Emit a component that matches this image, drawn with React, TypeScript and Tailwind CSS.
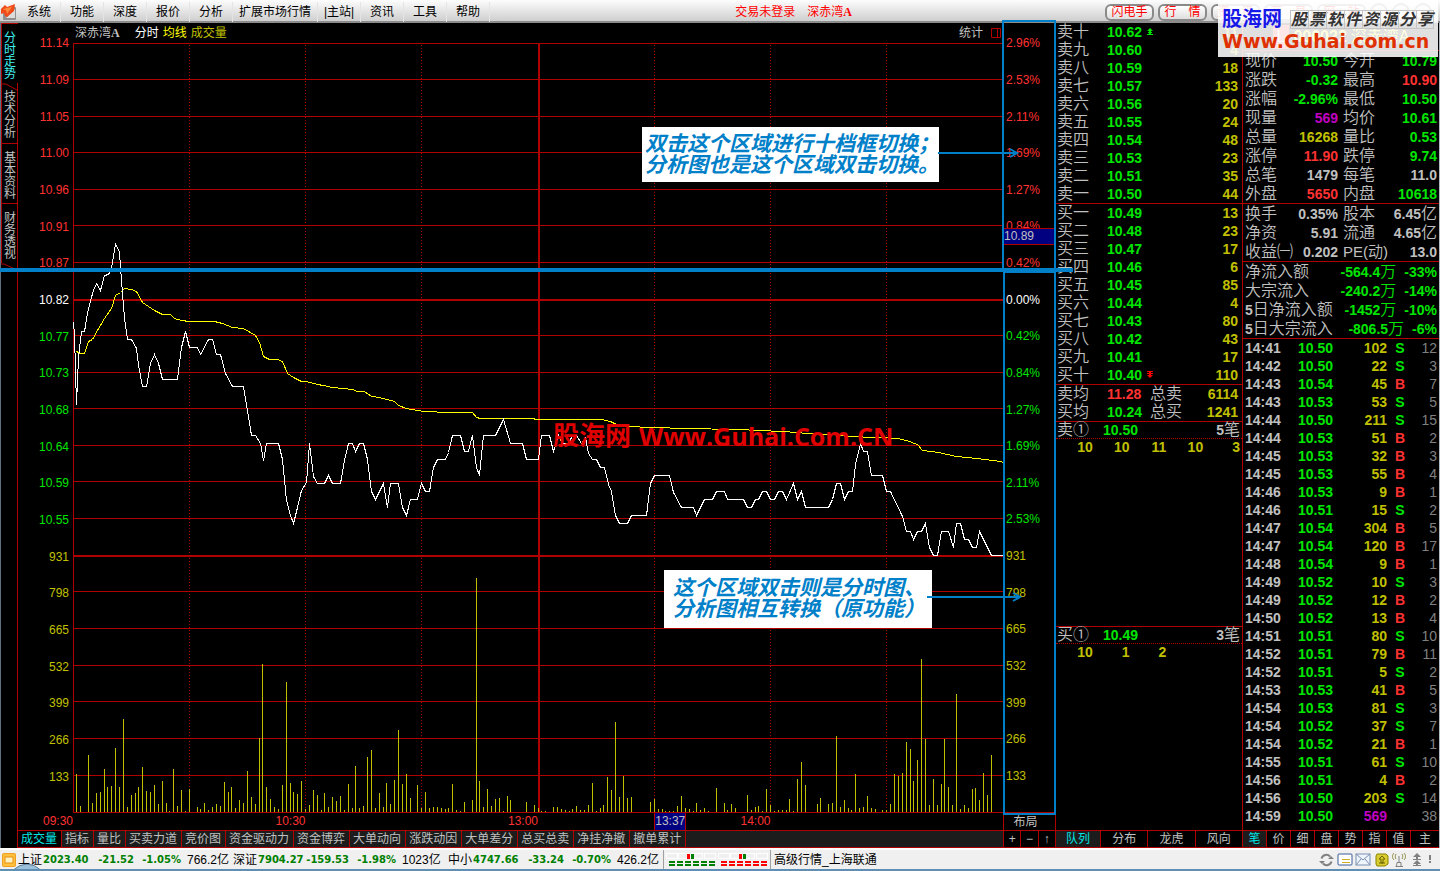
import React from "react";

const MENU = ["系统", "功能", "深度", "报价", "分析", "扩展市场行情", "|主站|", "资讯", "工具", "帮助"];
const SIDE_TABS = ["分时走势", "技术分析", "基本资料", "财务透视"];
const CHART_TABS = [
  "成交量", "指标", "量比", "买卖力道", "竞价图", "资金驱动力", "资金博弈",
  "大单动向", "涨跌动因", "大单差分", "总买总卖", "净挂净撤", "撤单累计",
];

const RED = "text-[#ff3232]";
const GREEN = "text-[#00e600]";
const YELLOW = "text-[#c0c000]";
const GRAY = "text-[#c0c0c0]";
const MAGENTA = "text-[#c000c0]";

const LEFT_SCALE: [string, string][] = [
  ["11.14", RED], ["11.09", RED], ["11.05", RED], ["11.00", RED], ["10.96", RED], ["10.91", RED], ["10.87", RED],
  ["10.82", "text-white"],
  ["10.77", GREEN], ["10.73", GREEN], ["10.68", GREEN], ["10.64", GREEN], ["10.59", GREEN], ["10.55", GREEN],
  ["931", YELLOW], ["798", YELLOW], ["665", YELLOW], ["532", YELLOW], ["399", YELLOW], ["266", YELLOW], ["133", YELLOW],
];
const RIGHT_SCALE: [string, string][] = [
  ["2.96%", RED], ["2.53%", RED], ["2.11%", RED], ["1.69%", RED], ["1.27%", RED], ["0.84%", RED], ["0.42%", RED],
  ["0.00%", "text-white"],
  ["0.42%", GREEN], ["0.84%", GREEN], ["1.27%", GREEN], ["1.69%", GREEN], ["2.11%", GREEN], ["2.53%", GREEN],
  ["931", YELLOW], ["798", YELLOW], ["665", YELLOW], ["532", YELLOW], ["399", YELLOW], ["266", YELLOW], ["133", YELLOW],
];

const SELLS: [string, string, string][] = [
  ["卖十", "10.62", "11"], ["卖九", "10.60", "4"], ["卖八", "10.59", "18"], ["卖七", "10.57", "133"], ["卖六", "10.56", "20"],
  ["卖五", "10.55", "24"], ["卖四", "10.54", "48"], ["卖三", "10.53", "23"], ["卖二", "10.51", "35"], ["卖一", "10.50", "44"],
];
const BUYS: [string, string, string][] = [
  ["买一", "10.49", "13"], ["买二", "10.48", "23"], ["买三", "10.47", "17"], ["买四", "10.46", "6"], ["买五", "10.45", "85"],
  ["买六", "10.44", "4"], ["买七", "10.43", "80"], ["买八", "10.42", "43"], ["买九", "10.41", "17"], ["买十", "10.40", "110"],
];

type Pair = [string, string, string, string, string, string];
const QUOTES: Pair[] = [
  ["现价", "10.50", GREEN, "今开", "10.79", GREEN],
  ["涨跌", "-0.32", GREEN, "最高", "10.90", RED],
  ["涨幅", "-2.96%", GREEN, "最低", "10.50", GREEN],
  ["现量", "569", MAGENTA, "均价", "10.61", GREEN],
  ["总量", "16268", YELLOW, "量比", "0.53", GREEN],
  ["涨停", "11.90", RED, "跌停", "9.74", GREEN],
  ["总笔", "1479", GRAY, "每笔", "11.0", GRAY],
  ["外盘", "5650", RED, "内盘", "10618", GREEN],
];
const BASICS: Pair[] = [
  ["换手", "0.35%", GRAY, "股本", "6.45亿", GRAY],
  ["净资", "5.91", GRAY, "流通", "4.65亿", GRAY],
  ["收益㈠", "0.202", GRAY, "PE(动)", "13.0", GRAY],
];
const FLOWS: [string, string, string][] = [
  ["净流入额", "-564.4万", "-33%"],
  ["大宗流入", "-240.2万", "-14%"],
  ["5日净流入额", "-1452万", "-10%"],
  ["5日大宗流入", "-806.5万", "-6%"],
];
const TICKS = [
  "14:41 10.50 102 S 12", "14:42 10.50 22 S 3", "14:43 10.54 45 B 7", "14:43 10.53 53 S 5", "14:44 10.50 211 S 15",
  "14:44 10.53 51 B 2", "14:45 10.53 32 B 3", "14:45 10.53 55 B 4", "14:46 10.53 9 B 1", "14:46 10.51 15 S 2",
  "14:47 10.54 304 B 5", "14:47 10.54 120 B 17", "14:48 10.54 9 B 1", "14:49 10.52 10 S 3", "14:49 10.52 12 B 2",
  "14:50 10.52 13 B 4", "14:51 10.51 80 S 10", "14:52 10.51 79 B 11", "14:52 10.51 5 S 2", "14:53 10.53 41 B 5",
  "14:54 10.53 81 S 3", "14:54 10.52 37 S 7", "14:54 10.52 21 B 1", "14:55 10.51 61 S 10", "14:56 10.51 4 B 2",
  "14:56 10.50 203 S 14", "14:59 10.50 569 - 38",
].map((row) => row.split(" "));

const INDEXES = [
  ["上证", "2023.40", "-21.52", "-1.05%", "766.2亿"],
  ["深证", "7904.27", "-159.53", "-1.98%", "1023亿"],
  ["中小", "4747.66", "-33.24", "-0.70%", "426.2亿"],
];

const PRICE_LINE =
  "73,322 74,335 76,404 78,357 81,331 84,331 87,313 90,300 93,290 96,283 100,290 104,275 108,274 111,268 115,244 119,251 120,267 122,293 124,318 127,339 131,339 136,348 138,365 142,386 146,386 150,363 154,354 158,363 162,379 177,379 181,347 185,331 189,347 197,347 200,354 208,339 212,339 216,354 220,354 225,373 232,386 243,386 247,410 251,435 255,435 260,443 263,460 266,443 278,443 282,459 286,500 290,515 293,523 297,507 301,490 306,482 309,443 313,476 317,483 324,483 328,475 332,483 340,483 344,460 348,443 352,443 355,451 359,443 363,443 367,459 371,491 375,499 383,483 387,507 390,483 398,483 402,507 406,515 410,499 417,499 421,483 425,491 429,491 433,467 437,459 445,459 448,452 452,435 460,435 464,451 468,451 472,435 476,467 479,475 483,435 495,435 503,419 510,443 522,443 526,459 538,459 541,435 549,435 553,451 558,435 562,443 568,443 572,435 576,435 581,443 585,437 588,453 592,459 596,459 600,467 604,467 608,484 611,491 615,515 619,523 627,523 631,515 646,515 650,483 654,475 669,475 673,492 681,507 693,507 696,515 704,499 712,499 716,491 724,491 727,499 743,499 747,507 751,507 755,499 758,499 762,491 766,491 770,499 774,499 778,491 782,491 786,499 793,483 797,499 801,491 805,507 828,507 832,499 836,483 840,483 844,499 848,491 852,491 855,464 860,443 863,451 867,451 871,475 882,475 886,491 890,491 902,516 906,531 910,531 913,539 917,531 921,531 925,523 929,547 933,555 937,555 941,531 948,531 953,547 956,523 960,523 964,539 968,539 972,547 976,547 979,531 991,555 1003,555";
const AVERAGE_LINE =
  "76,351 80,353 84,353 88,341 92,339 97,330 104,318 111,308 115,295 120,292 124,288 131,289 136,291 142,302 154,310 162,314 170,314 174,318 181,320 189,321 214,321 222,323 232,327 243,328 255,335 259,342 263,356 269,359 277,359 282,361 287,373 293,377 301,381 306,381 317,384 323,385 332,387 352,389 357,391 364,391 371,396 379,397 394,401 398,405 406,408 423,411 450,412 472,412 476,417 480,418 533,418 535,419 601,419 610,421 616,424 625,426 654,427 684,428 737,429 781,431 798,432 805,433 833,434 847,436 877,437 897,438 906,440 917,444 922,450 938,452 956,456 976,458 1000,461 1003,462";

/* One bar per traded minute: horizontal position and height. */
const VOLUME =
  "76,38 80,6 88,57 92,9 96,19 100,20 104,43 107,25 111,26 115,64 119,25 123,93 127,5 131,17 135,19 138,25 142,45 146,21 150,20 154,27 158,8 162,31 166,9 169,1 173,43 177,6 181,22 185,1 189,23 197,5 200,3 204,9 208,2 212,5 216,8 220,6 224,30 228,20 231,25 235,4 239,12 243,9 247,41 251,15 255,8 259,74 262,148 266,25 270,13 274,5 278,3 282,27 286,130 290,29 293,20 297,18 301,31 305,3 309,7 313,22 317,17 321,2 324,19 328,5 332,15 336,11 340,16 344,2 348,28 352,4 355,46 359,4 363,6 367,55 371,62 375,4 379,19 383,5 386,29 390,8 394,32 398,82 402,28 406,38 410,14 417,27 421,4 425,20 429,4 433,5 437,5 441,4 445,3 448,4 452,28 456,2 460,1 464,10 472,12 476,234 479,31 483,5 487,23 491,6 495,13 499,14 503,1 507,16 510,12 526,10 534,7 538,4 541,1 545,1 553,5 557,5 561,3 565,2 569,1 572,3 576,6 580,2 584,2 588,7 592,29 596,1 600,4 603,7 607,35 611,22 615,90 619,15 623,36 627,14 631,15 650,10 654,13 658,3 662,3 665,1 669,1 673,1 677,6 681,16 685,4 689,3 693,1 696,9 700,2 704,4 708,1 716,24 724,9 727,2 731,8 735,4 747,17 751,2 755,5 758,6 762,1 766,23 770,7 774,1 778,2 782,2 786,2 789,13 793,1 797,33 801,50 805,27 817,8 820,14 828,8 832,9 836,76 840,5 844,12 848,4 851,2 855,38 859,4 863,5 867,16 871,4 875,3 882,2 886,2 890,8 894,38 898,36 902,39 906,70 910,63 913,31 917,52 921,153 925,73 929,7 933,33 937,7 941,28 944,73 948,25 952,7 956,118 960,3 964,7 968,4 972,23 975,24 979,12 983,39 987,17 991,57"
    .split(" ")
    .map((p) => p.split(",").map(Number));

const ROW_LINES = [79, 116, 152, 189, 225, 262, 335, 372, 408, 445, 481, 518, 591, 628, 665, 701, 738, 775];
const DOTTED_LINES = [189, 305, 421, 654, 770, 886];

function Chart() {
  return (
    <svg
      role="img"
      aria-label="分时走势图"
      className="block h-full w-full"
      viewBox="73 43 930 770"
      preserveAspectRatio="none"
      shapeRendering="crispEdges"
      fill="none"
    >
      <g stroke="#b00000" strokeWidth="1">
        {ROW_LINES.map((y) => (
          <path key={y} d={`M73 ${y + 0.5}H1003`} />
        ))}
        <path d="M73 43.5H1003M73.5 43V812M73 812.5H1003" />
        {DOTTED_LINES.map((x) => (
          <path key={x} d={`M${x + 0.5} 45V812`} strokeDasharray="1 2" />
        ))}
      </g>
      <path d="M73 300H1003M73 556H1003M539 43V812" stroke="#b00000" strokeWidth="2" />
      <g fill="#c0c000">
        {VOLUME.map(([x, h]) => (
          <rect key={x} x={x} y={812 - h} width="1" height={h} />
        ))}
      </g>
      <g strokeWidth="1" transform="translate(0.5 0.5)">
        <polyline points={AVERAGE_LINE} stroke="#ffff00" />
        <polyline points={PRICE_LINE} stroke="#ffffff" />
      </g>
    </svg>
  );
}

function Scale({ items, className }: { items: [string, string][]; className: string }) {
  return (
    <ol className={`flex flex-1 flex-col ${className}`}>
      {items.map(([label, color], i) => (
        <li key={i} className={`flex flex-1 items-center ${color}`}>
          {label}
        </li>
      ))}
    </ol>
  );
}

function StockName() {
  return (
    <span>
      深赤湾<b className="font-['Liberation_Serif'] font-bold">A</b>
    </span>
  );
}

function MenuBar() {
  return (
    <header className="flex h-[23px] shrink-0 items-center border-b-2 border-[#8c8c8c] bg-linear-to-b from-[#fdfdfd] to-[#cfcfcf] pt-[2px] text-black">
      <svg width="17" height="16" viewBox="0 0 17 16" className="mr-px shrink-0" aria-hidden="true">
        <rect x="3" y="3" width="13" height="13" rx="1" fill="#8f8f8f" />
        <path d="M8 12L15 5V14H6z" fill="#dcdcdc" />
        <path d="M1 5L5 1L7 3L15 0L14 7L7 13L5 12L4 9L1 10z" fill="#f04a18" />
        <path d="M3 6L6 4L12 3L7 10L6 6z" fill="#ff8a3c" />
      </svg>
      <nav className="flex flex-1">
        {MENU.map((m) => (
          <button
            key={m}
            className={`h-5 border-r border-[#e4e4e4] text-center whitespace-nowrap ${m.length > 4 && m[0] !== "|" ? "w-[85px]" : "w-[43px]"}`}
          >
            {m}
          </button>
        ))}
      </nav>
      <p className="mr-[253px] flex gap-3 text-[#ff0000]">
        <span>交易未登录</span>
        <StockName />
      </p>
      <div className="mt-[2px] mr-1 flex gap-1">
        {["闪电手", "行　情", "资　讯", "商　易", "网　站"].map((b) => (
          <button
            key={b}
            className="h-[17px] w-[49px] rounded-md border-2 border-[#8a8a8a] bg-linear-to-b from-white to-[#dedede] leading-[13px] text-[#ff0000]"
          >
            {b}
          </button>
        ))}
      </div>
      <div className="flex gap-1 pr-2">
        {["最小化", "还原", "关闭"].map((b) => (
          <button key={b} aria-label={b} className="size-[18px] rounded-full border-2 border-[#8a8a8a] bg-[#e8e8e8]" />
        ))}
      </div>
    </header>
  );
}

function SideTabs() {
  return (
    <nav className="flex w-[17px] shrink-0 flex-col border-r border-[#b00000]">
      {SIDE_TABS.map((t, i) => (
        <button
          key={t}
          className={`relative flex h-[60px] w-[17px] flex-col items-center border-l border-[#b00000] pt-2 leading-3 ${
            i === 0 ? "bg-black text-[#40f0f0]" : GRAY
          } ${i === 1 ? "" : "border-t"}`}
        >
          {i === 1 && (
            <svg className="absolute top-0 -left-px" width="17" height="8" fill="none" stroke="#b00000" aria-hidden="true">
              <path d="M0 1H5L16 7" />
            </svg>
          )}
          {t.split("").map((c) => (
            <span key={c}>{c}</span>
          ))}
        </button>
      ))}
      <svg width="17" height="8" fill="none" stroke="#b00000" aria-hidden="true">
        <path d="M0 1H3L16 7" />
      </svg>
    </nav>
  );
}

function ChartPanel() {
  return (
    <section className="flex min-w-0 flex-1 flex-col">
      <div className="flex h-5 shrink-0 items-center gap-1 pl-[57px]">
        <span className={`mr-[11px] ${GRAY}`}>
          <StockName />
        </span>
        <span className="text-white">分时</span>
        <span className="text-[#ffff00]">均线</span>
        <span className={`flex-1 ${YELLOW}`}>成交量</span>
        <button className={GRAY}>统计</button>
        <svg width="10" height="10" className="mr-[2px] ml-1" fill="none" stroke="#b00000" aria-hidden="true">
          <path d="M0.500 0.500H9.500V9.500H0.500zM6.500 0V10" />
        </svg>
      </div>
      <div className="flex min-h-0 flex-1">
        <div className="-mt-[18px] flex w-[55px] shrink-0 flex-col pb-[18px] pr-1">
          <Scale items={LEFT_SCALE} className="items-end" />
        </div>
        <div className="relative min-w-0 flex-1">
          <div className="absolute inset-0">
            <Chart />
          </div>
        </div>
      </div>
      <div className="flex h-[17px] shrink-0 leading-[17px] text-[#ff3232]">
        <span className="w-[55px] text-right">09:30</span>
        <div className="grid flex-1 grid-cols-8 text-right">
          <span className="col-span-2">10:30</span>
          <span className="col-span-2">13:00</span>
          <span className="col-start-6 flex justify-between">
            <span className="border-x border-[#b00000] bg-[#000080] text-[#c0c0c0]">13:37</span>
            <span>14:00</span>
          </span>
        </div>
      </div>
      <nav className="flex h-[18px] shrink-0 border-y border-[#b00000] bg-[#1c1c1c]">
        {CHART_TABS.map((t, i) => (
          <button
            key={t}
            className={`border-r border-[#b00000] pr-1 pl-[3px] leading-4 whitespace-nowrap ${i === 0 ? "bg-black text-[#00e6e6]" : GRAY}`}
          >
            {t}
          </button>
        ))}
      </nav>
    </section>
  );
}

function PercentScale() {
  return (
    <aside className="relative flex w-[53px] shrink-0 flex-col border-r border-[#b00000]">
      <div className="flex flex-1 flex-col pt-[2px] pb-[18px] pl-[3px]">
        <Scale items={RIGHT_SCALE} className="items-start" />
      </div>
      <div className="absolute top-[205px] left-0 h-[17px] w-full border-y border-[#b00000] bg-[#000080] pl-px leading-[15px] text-[#c0c0c0]">
        10.89
      </div>
      <button className="h-[18px] border-t border-l border-[#b00000] text-center leading-4 text-[#c0c0c0]">
        <span className="pr-2">布局</span>
      </button>
      <div className="grid h-[18px] grid-cols-3 border-y border-[#b00000] text-[#c0c0c0]">
        {["+", "−", "↑"].map((b) => (
          <button key={b} className="border-l border-[#b00000] leading-4">
            {b}
          </button>
        ))}
      </div>
    </aside>
  );
}

function DepthRows({ rows, markAt }: { rows: [string, string, string][]; markAt: number }) {
  return (
    <table className="w-full table-fixed border-separate border-spacing-0 border-b border-[#b00000] leading-4">
      <colgroup>
        <col className="w-[51px]" />
        <col className="w-[40px]" />
        <col />
        <col className="w-[60px]" />
      </colgroup>
      <tbody>
        {rows.map(([name, price, qty], i) => (
          <tr key={name} className="h-[18px]">
            <th className="pl-px text-left text-base leading-4 font-[350]">{name}</th>
            <td className={`font-bold ${GREEN}`}>{price}</td>
            <td>
              {i === markAt && (
                <svg width="6" height="8" className="block" aria-hidden="true">
                  {markAt === 0 ? (
                    <path d="M3 0L6 3H4V4H5V5H4V6H6V7H0V6H2V5H1V4H2V3H0z" fill="#00e600" />
                  ) : (
                    <path d="M0 0H6V1H4V2H6V3H4V4H6L3 7L0 4H2V3H0V2H2V1H0z" fill="#ff0000" />
                  )}
                </svg>
              )}
            </td>
            <td className={`pr-1 text-right font-bold ${YELLOW}`}>{qty}</td>
          </tr>
        ))}
      </tbody>
    </table>
  );
}

function Queue({ name, price, count, orders }: { name: string; price: string; count: string; orders: string[] }) {
  return (
    <div className="flex-1 border-b border-[#b00000]">
      <div className="flex h-[17px] items-center border-b border-dotted border-[#b00000] pr-[2px] pl-px leading-4 font-bold">
        <span className="w-[46px] text-base leading-4 font-[350]">{name}</span>
        <span className={`flex-1 ${GREEN}`}>{price}</span>
        <span>{count}</span>
        <span className="text-base leading-4 font-[350]">笔</span>
      </div>
      <div className={`grid grid-cols-5 pr-[2px] text-right leading-[17px] font-bold ${YELLOW}`}>
        {orders.map((o, i) => (
          <span key={i}>{o}</span>
        ))}
      </div>
    </div>
  );
}

function OrderBook() {
  return (
    <section className="flex w-[187px] shrink-0 flex-col border-r border-[#b00000] text-sm text-[#c0c0c0]">
      <DepthRows rows={SELLS} markAt={0} />
      <DepthRows rows={BUYS} markAt={9} />
      <table className="w-full table-fixed border-separate border-spacing-0 border-b border-[#b00000] leading-4">
        <colgroup>
          <col className="w-[51px]" />
          <col className="w-[43px]" />
          <col className="w-[40px]" />
          <col />
        </colgroup>
        <tbody>
          {[
            ["卖均", "11.28", "总卖", "6114"],
            ["买均", "10.24", "总买", "1241"],
          ].map(([a, b, c, d], i) => (
            <tr key={a} className="h-[18px]">
              <th className="pl-px text-left text-base leading-4 font-[350]">{a}</th>
              <td className={`font-bold ${i === 0 ? RED : GREEN}`}>{b}</td>
              <th className="text-left text-base leading-4 font-[350]">{c}</th>
              <td className={`pr-1 text-right font-bold ${YELLOW}`}>{d}</td>
            </tr>
          ))}
        </tbody>
      </table>
      <Queue name="卖①" price="10.50" count="5" orders={["10", "10", "11", "10", "3"]} />
      <Queue name="买①" price="10.49" count="3" orders={["10", "1", "2"]} />
      <nav className="flex h-[17px] border-b border-[#b00000] text-xs">
        {["队列", "分布", "龙虎", "风向"].map((t, i) => (
          <button
            key={t}
            className={`leading-4 ${i < 3 ? "border-r border-[#b00000]" : ""} ${i === 0 ? "w-[45px] bg-[#1c1c1c] text-[#00e6e6]" : "flex-1"}`}
          >
            {t}
          </button>
        ))}
      </nav>
    </section>
  );
}

function PairTable({ rows }: { rows: Pair[] }) {
  return (
    <table className="w-full table-fixed border-separate border-spacing-0 border-b border-[#b00000] leading-4">
      <colgroup>
        <col className="w-[52px]" />
        <col className="w-[43px]" />
        <col className="w-[50px]" />
        <col />
      </colgroup>
      <tbody>
        {rows.map(([a, av, ac, b, bv, bc]) => (
          <tr key={a} className="h-[19px]">
            <th className="pl-[2px] text-left text-base leading-4 font-[350] whitespace-nowrap">{a}</th>
            <td className={`font-bold ${ac}`}>
              <span className="flex justify-end">{av}</span>
            </td>
            <th className={`pl-[5px] text-left font-[350] whitespace-nowrap ${b[0] === "P" ? "text-[15px] leading-4" : "text-base leading-4"}`}>{b}</th>
            <td className={`pr-[2px] font-bold whitespace-nowrap ${bc}`}>
              <span className="flex items-center justify-end">
                {bv.replace("亿", "")}
                {bv.includes("亿") && <span className="text-base leading-4 font-[350]">亿</span>}
              </span>
            </td>
          </tr>
        ))}
      </tbody>
    </table>
  );
}

function QuotePanel() {
  return (
    <section className="flex w-[197px] shrink-0 flex-col border-r border-[#b0b8c0] text-sm text-[#c0c0c0]">
      <h2 className="flex h-[28px] items-center justify-center gap-1 border-b border-[#b00000] text-base text-[#ffff00]">
        <span className="bg-[#ff3232] px-1 text-white">L</span>
        <span className="font-bold">000022</span>
        <span>深赤湾A</span>
      </h2>
      <PairTable rows={QUOTES} />
      <PairTable rows={BASICS} />
      <dl className="border-b border-[#b00000]">
        {FLOWS.map(([name, amount, pct]) => (
          <div key={name} className="flex h-[19px] items-center pr-[2px] pl-[2px] font-bold">
            <dt className="flex flex-1 items-center text-base leading-[19px] font-[350]">
              {name[0] === "5" && <b className="text-sm">5</b>}
              {name.replace("5", "")}
            </dt>
            <dd className={`flex items-center ${GREEN}`}>
              {amount.replace("万", "")}
              <span className="mr-2 text-base leading-[19px] font-[350]">万</span>
              {pct}
            </dd>
          </div>
        ))}
      </dl>
      <div className="flex-1">
        <table className="w-full table-fixed font-bold">
          <colgroup>
            <col className="w-[55px]" />
            <col className="w-[44px]" />
            <col className="w-[45px]" />
            <col className="w-[26px]" />
            <col />
          </colgroup>
          <tbody>
            {TICKS.map(([time, price, qty, side, n], i) => (
              <tr key={i} className="h-[18px] leading-[18px]">
                <td className="pl-[2px]">{time}</td>
                <td className={GREEN}>{price}</td>
                <td className={`text-right ${side === "-" ? MAGENTA : YELLOW}`}>{qty}</td>
                <td className={`text-center ${side === "B" ? RED : GREEN}`}>{side === "-" ? "" : side}</td>
                <td className="pr-[2px] text-right font-normal text-[#808080]">{n}</td>
              </tr>
            ))}
          </tbody>
        </table>
      </div>
      <nav className="flex h-[18px] border-y border-[#b00000] text-xs">
        {["笔", "价", "细", "盘", "势", "指", "值", "主"].map((t, i) => (
          <button
            key={t}
            className={`leading-4 ${i < 7 ? "w-6 border-r border-[#b00000]" : "flex-1"} ${i === 0 ? "bg-[#1c1c1c] text-[#00e6e6]" : ""}`}
          >
            {t}
          </button>
        ))}
      </nav>
    </section>
  );
}

function Gauge({ color, first, second }: { color: string; first: string; second: string }) {
  return (
    <svg width="50" height="14" shapeRendering="crispEdges" aria-hidden="true">
      {[0, 12, 25, 38].map((x) => (
        <rect key={x} x={x + 0.5} y="0.5" width="11" height="5" fill="#f0f0f0" stroke="#ffffff" />
      ))}
      <rect x="21" y="1" width="3" height="5" fill={first} />
      <rect x="25" y="1" width="3" height="5" fill={second} />
      {[3, 11, 19, 27, 35, 43].map((x) => (
        <path key={x} d={`M${x} 8H${x + 6}V10H${x}zM${x} 11H${x + 6}V13H${x}z`} fill={color} />
      ))}
    </svg>
  );
}

function StatusBar() {
  return (
    <footer className="relative flex h-[23px] shrink-0 items-center overflow-hidden border-t-2 border-b-2 border-t-white border-b-[#5f8fb4] bg-[#f0f0f0] pl-[2px] text-black">
      <svg width="14" height="14" viewBox="0 0 14 14" className="mr-[2px] shrink-0" aria-hidden="true">
        <rect width="14" height="14" rx="2" fill="#f0a020" />
        <rect x="1" y="1" width="12" height="12" rx="1" fill="#ffc040" />
        <rect x="3" y="4" width="8" height="6" fill="#fff2c0" stroke="#e89010" />
      </svg>
      {INDEXES.map(([name, value, change, pct, amount]) => (
        <p key={name} className="flex w-[215px] items-center whitespace-nowrap">
          <span className="w-[25px]">{name}</span>
          <span className="flex font-['DejaVu_Sans'] text-[10px] font-bold text-[#008000]">
            <span className="w-[46px]">{value}</span>
            <span className="w-[45px] text-right">{change}</span>
            <span className="w-[47px] text-right">{pct}</span>
          </span>
          <span className="ml-[6px]">{amount}</span>
        </p>
      ))}
      <div className="flex h-full items-center gap-[2px] border-x border-[#a0a0a0] px-[2px]">
        <Gauge color="#008000" first="#ff0000" second="#008000" />
        <Gauge color="#ff0000" first="#ff0000" second="#008000" />
      </div>
      <p className="flex-1 pl-[3px]">高级行情_上海联通</p>
      <svg width="120" height="18" viewBox="0 0 120 18" className="mr-[1px] shrink-0" fill="none" aria-hidden="true">
        <path d="M2.500 7.500A5 5 0 0 1 11 5.500M12.500 10.500A5 5 0 0 1 4 12.500" stroke="#808080" strokeWidth="2" />
        <path d="M9 8H15L12 5zM0 10H6L3 13z" fill="#808080" />
        <rect x="19" y="3" width="14" height="11" rx="1" fill="#ffffff" stroke="#3a5a9c" />
        <path d="M23 8.500H31M23 11.500H31" stroke="#d0b020" />
        <rect x="37" y="3" width="14" height="11" fill="#eef4fb" stroke="#7a90b0" />
        <path d="M37 3L44 9L51 3M37 14L42 8M51 14L46 8" stroke="#7a90b0" />
        <path d="M58 3H67L69 5V13L66 15H58L57 13V5z" fill="#d8cc30" stroke="#8a8400" />
        <path d="M63 5L66 8H64V12H62V8H60zM60 12H66" stroke="#6a6400" />
        <path d="M77 3C76 5 76 6 77 8M83 3C84 5 84 6 83 8M75 2C73 4 73 7 75 9M85 2C87 4 87 7 85 9" stroke="#8a8a40" />
        <path d="M80 5V11M78 11.500H82V15.500H77.500zM76.500 15.500H84" stroke="#808080" />
        <path d="M98 2L102 6H99V8H102V9H94V8H97V6H94zM98 9L102 13H99V14H102V15H94V14H97V13H94z" fill="#808080" />
        <path d="M111 4V9M111 10V12" stroke="#808080" strokeWidth="2" />
      </svg>
      <svg className="absolute -bottom-[2px] left-3" width="30" height="7" aria-hidden="true">
        <path d="M0 7Q15 -7 30 7z" fill="#9dc0da" stroke="#5d7f9c" />
      </svg>
    </footer>
  );
}

function Arrow({ className, width }: { className: string; width: number }) {
  return (
    <svg className={`absolute ${className}`} width={width} height="10" fill="none" stroke="#0080c8" strokeWidth="2" aria-hidden="true">
      <path d={`M0 5H${width - 2}M${width - 9} 1L${width - 2} 5L${width - 9} 9`} />
    </svg>
  );
}

function Annotations() {
  return (
    <div className="pointer-events-none text-[21px] leading-[21px] font-bold text-[#0080c8] italic">
      <div className="absolute top-5 right-[384px] h-[252px] w-[54px] border-2 border-[#0080c8]" />
      <div className="absolute top-[271px] right-[384px] bottom-[56px] w-[53px] border-2 border-[#0080c8]" />
      <div className="absolute top-[268px] right-[367px] left-0 h-1 bg-[#0080c8]" />
      <p className="absolute top-[127px] right-[501px] h-[55px] w-[297px] bg-white pt-[6px] pl-[3px] whitespace-nowrap">
        双击这个区域进行十档框切换；
        <br />
        分析图也是这个区域双击切换。
      </p>
      <Arrow className="top-[148px] right-[421px]" width={81} />
      <p className="absolute top-[570px] right-[508px] h-[58px] w-[268px] bg-white pt-[7px] pl-[9px] whitespace-nowrap">
        这个区域双击则是分时图、
        <br />
        分析图相互转换（原功能）
      </p>
      <Arrow className="top-[592px] right-[418px]" width={95} />
    </div>
  );
}

function Watermarks() {
  return (
    <div className="pointer-events-none font-bold whitespace-nowrap">
      <p className="absolute top-[419px] left-[553px] flex items-center gap-2 text-[26px] leading-[34px] text-[#e00000]">
        股海网
        <span className="font-['Open_Sans',sans-serif] text-[25px]">Www.Guhai.Com.CN</span>
      </p>
      <div className="absolute top-0 right-[2px] h-[57px] w-[220px] bg-white/88 pt-[9px] pl-1">
        <div className="flex items-center gap-2 text-[20px] leading-5 text-[#1818e8]">
          股海网
          <span className="flex text-base leading-[17px] text-[#333333] italic">
            {"股票软件资源分享".split("").map((c) => (
              <span key={c} className="w-[18px] border border-r-0 border-[#c4c4c4] last:border-r">
                {c}
              </span>
            ))}
          </span>
        </div>
        <p className="font-['DejaVu_Sans',sans-serif] text-[19px] leading-6 text-[#e03000]">Www.Guhai.com.cn</p>
      </div>
    </div>
  );
}

export default function App() {
  return (
    <div className="relative flex min-h-screen flex-col bg-black font-['Liberation_Sans','Noto_Sans_CJK_SC',sans-serif] text-xs">
      <MenuBar />
      <main className="flex flex-1 border-l border-[#607080]">
        <SideTabs />
        <ChartPanel />
        <PercentScale />
        <OrderBook />
        <QuotePanel />
      </main>
      <StatusBar />
      <Annotations />
      <Watermarks />
    </div>
  );
}
